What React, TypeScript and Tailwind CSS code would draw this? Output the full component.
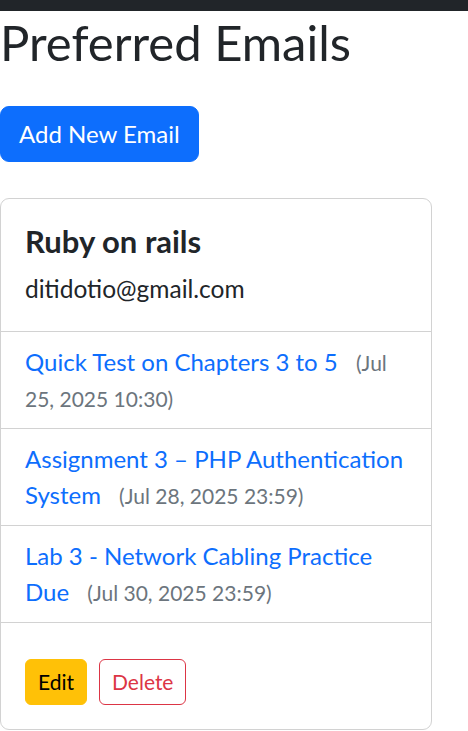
import React from "react"

const reminders = [
  { title: "Quick Test on Chapters 3 to 5", due: "(Jul 25, 2025 10:30)" },
  { title: "Assignment 3 – PHP Authentication System", due: "(Jul 28, 2025 23:59)" },
  { title: "Lab 3 - Network Cabling Practice Due", due: "(Jul 30, 2025 23:59)" },
]

export default function App() {
  return (
    <div className="min-h-screen bg-white text-[#212529] font-['Lato','Noto_Sans',sans-serif]">
      <div className="h-[11px] bg-[#212529]" />

      <h1 className="mt-[2px] text-[49px] leading-[58px] font-normal">Preferred Emails</h1>

      <button className="mt-[35px] rounded-[9px] border border-[#0d6efd] bg-[#0d6efd] px-[18px] py-[9px] text-[24px] leading-[36px] text-white">
        Add New Email
      </button>

      <div className="mt-[36px] w-[432px] overflow-hidden rounded-[9px] border border-[#d2d2d2]">
        <div className="p-[24px]">
          <h5 className="mb-[12px] text-[31px] leading-[36px] font-bold">Ruby on rails</h5>
          <p className="text-[24.5px] leading-[36px]">ditidotio@gmail.com</p>
        </div>

        <ul>
          {reminders.map((r) => (
            <li key={r.title} className="border-t border-[#d2d2d2] px-[24px] py-[12px] text-[24px] leading-[36px]">
              <a href="#" className="text-[#0d6efd]">{r.title}</a>{" "}
              <small className="ml-[12px] text-[21px] leading-none text-[#6c757d]">{r.due}</small>
            </li>
          ))}
        </ul>

        <div className="border-t border-[#d2d2d2] px-[24px] pb-[24px] pt-[36px]">
          <div className="flex gap-[12px]">
            <button className="rounded-[6px] border border-[#ffc107] bg-[#ffc107] px-[12px] py-[6px] text-[21px] leading-[31.5px] text-black">
              Edit
            </button>
            <button className="rounded-[6px] border border-[#dc3545] bg-white px-[12px] py-[6px] text-[21px] leading-[31.5px] text-[#dc3545]">
              Delete
            </button>
          </div>
        </div>
      </div>
    </div>
  )
}
